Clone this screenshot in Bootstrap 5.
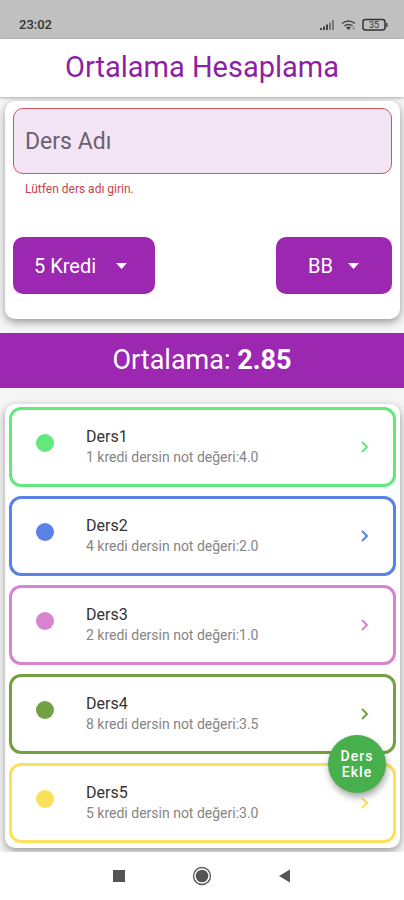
<!DOCTYPE html>
<html lang="tr">
<head>
<meta charset="utf-8">
<meta name="viewport" content="width=device-width, initial-scale=1">
<title>Ortalama Hesaplama</title>
<link href="https://cdn.jsdelivr.net/npm/bootstrap@5.3.0/dist/css/bootstrap.min.css" rel="stylesheet">
<style>
  body { font-family: Roboto, "Liberation Sans", sans-serif; background: #f6f6f6; }
  .status-strip { background: #c0c0c0; height: 39px; padding: 10px 16px 0 19px; color: #333; }
  .clock { font-size: 13px; line-height: 30px; font-weight: 500; }
  .app-header { background: #fff; height: 58px; box-shadow: 0 1px 3px rgba(0,0,0,.3); }
  .app-title { font-size: 29px; line-height: 57px; font-weight: 400; color: #8e1fa3; }
  .panel { background: #fff; border-radius: 10px; margin: 0 4px 0 5px; box-shadow: 0 3px 8px rgba(0,0,0,.4); }
  .form-panel { margin-top: 4px; padding: 7px 8px 25px; }
  .name-input { height: 66px; font-size: 23px; padding: 0 11px; background: #f3e5f5; border: 1px solid #d0555c; border-radius: 10px; color: #333; }
  .name-input::placeholder { color: #6b616e; opacity: 1; }
  .name-input:focus { background: #f3e5f5; }
  .error-text { font-size: 12px; line-height: 16px; margin: 7px 12px 40px; color: #c8434b; }
  .picker { height: 57px; width: auto; font-size: 20px; line-height: 24px; color: #fff; border: 0; border-radius: 10px;
    background: #9c27b0 url("data:image/svg+xml,%3Csvg xmlns='http://www.w3.org/2000/svg' viewBox='0 0 11 6'%3E%3Cpath d='M0 0h11L5.500 6z' fill='white'/%3E%3C/svg%3E") no-repeat right 28px center / 11px 6px; }
  .credit-picker { width: 142px; padding: 0 28px 0 21px; }
  .grade-picker { width: 116px; padding: 0 28px 0 32px; }
  .grade-picker.picker { background-position: right 33px center; }
  .average { background: #9c27b0; color: #fff; margin-top: 14px; font-size: 27px; line-height: 55px; }
  .list-panel { margin-top: 16px; margin-bottom: 4px; padding: 3px 4px 5px; }
  .courses { gap: 9px; }
  .course { min-height: 80px; border: 3px solid var(--tone); border-radius: 12px; padding: 0 22px 0 24px; color: #333; background: #fff; }
  .tone-green { --tone: #63e87c; } .tone-blue { --tone: #5a82e6; } .tone-pink { --tone: #d883cd; }
  .tone-olive { --tone: #72a043; } .tone-yellow { --tone: #fbe15a; }
  .spot { width: 18px; height: 18px; margin: 0 32px 8px 0; background: var(--tone); }
  .course-name { font-size: 16px; line-height: 21px; }
  .course-info { font-size: 14px; line-height: 21px; color: #858585; }
  .add-btn { right: 18px; bottom: 107px; width: 58px; height: 58px; padding: 0; background: #47b04c; color: #fff; font-size: 14px; line-height: 16px; font-weight: 500; letter-spacing: 1px; box-shadow: 1px 4px 7px rgba(0,0,0,.35); }
  .add-btn:hover { background: #3e9f43; color: #fff; }
  .system-nav { background: #fff; height: 48px; gap: 63px; }
  .system-nav button { width: 20px; height: 20px; }
</style>
</head>
<body>
<div class="position-relative min-vh-100 d-flex flex-column">
  <div class="status-strip d-flex justify-content-between">
    <span class="clock">23:02</span>
    <svg width="69" height="14" viewBox="0 0 69 14" class="mt-2" aria-hidden="true">
      <g fill="#444"><path d="M1 10h2v2H1zM4 8.500h2V12H4zM7 6.500h2V12H7z"/><path d="M10 4.500h2V12h-2zM13 2h2v10h-2z" fill="#777"/></g>
      <g fill="none" stroke="#444" stroke-width="1.500"><path d="M23 5.500q6.500-5 13 0"/><path d="M25.300 8q4.200-3.200 8.400 0" /></g>
      <path d="M27 9.500q2.500-2 5 0L29.500 12z" fill="#444"/><path d="M34 9h1.500v3H34z" fill="#888"/>
      <rect x="44" y="1.500" width="22" height="10.500" rx="2.500" fill="none" stroke="#333" stroke-width="1.500"/>
      <path d="M67.200 5h1.300v4h-1.300z" fill="#333"/>
      <text x="55" y="10" text-anchor="middle" font-family="Roboto, sans-serif" font-size="9" fill="#333">35</text>
    </svg>
  </div>
  <header class="app-header text-center"><h1 class="app-title m-0">Ortalama Hesaplama</h1></header>

  <main>
    <form class="panel form-panel">
      <input class="form-control name-input" type="text" placeholder="Ders Adı" aria-label="Ders Adı" aria-describedby="nameError" aria-invalid="true">
      <div id="nameError" class="error-text">Lütfen ders adı girin.</div>
      <div class="d-flex justify-content-between">
        <select class="form-select picker credit-picker" aria-label="Kredi"><option>5 Kredi</option></select>
        <select class="form-select picker grade-picker" aria-label="Harf notu"><option>BB</option></select>
      </div>
    </form>

    <div class="average text-center">Ortalama: <strong>2.85</strong></div>

    <div class="panel list-panel">
      <div class="courses d-flex flex-column">
        <a href="#" class="course tone-green d-flex align-items-center text-decoration-none">
          <span class="spot rounded-circle"></span>
          <span class="flex-grow-1"><span class="course-name d-block">Ders1</span><span class="course-info d-block">1 kredi dersin not değeri:4.0</span></span>
          <svg width="12" height="14" viewBox="0 0 12 14" fill="none" stroke="var(--tone)" stroke-width="2" aria-hidden="true"><path d="M3 2l5 5-5 5"/></svg>
        </a>
        <a href="#" class="course tone-blue d-flex align-items-center text-decoration-none">
          <span class="spot rounded-circle"></span>
          <span class="flex-grow-1"><span class="course-name d-block">Ders2</span><span class="course-info d-block">4 kredi dersin not değeri:2.0</span></span>
          <svg width="12" height="14" viewBox="0 0 12 14" fill="none" stroke="var(--tone)" stroke-width="2" aria-hidden="true"><path d="M3 2l5 5-5 5"/></svg>
        </a>
        <a href="#" class="course tone-pink d-flex align-items-center text-decoration-none">
          <span class="spot rounded-circle"></span>
          <span class="flex-grow-1"><span class="course-name d-block">Ders3</span><span class="course-info d-block">2 kredi dersin not değeri:1.0</span></span>
          <svg width="12" height="14" viewBox="0 0 12 14" fill="none" stroke="var(--tone)" stroke-width="2" aria-hidden="true"><path d="M3 2l5 5-5 5"/></svg>
        </a>
        <a href="#" class="course tone-olive d-flex align-items-center text-decoration-none">
          <span class="spot rounded-circle"></span>
          <span class="flex-grow-1"><span class="course-name d-block">Ders4</span><span class="course-info d-block">8 kredi dersin not değeri:3.5</span></span>
          <svg width="12" height="14" viewBox="0 0 12 14" fill="none" stroke="var(--tone)" stroke-width="2" aria-hidden="true"><path d="M3 2l5 5-5 5"/></svg>
        </a>
        <a href="#" class="course tone-yellow d-flex align-items-center text-decoration-none">
          <span class="spot rounded-circle"></span>
          <span class="flex-grow-1"><span class="course-name d-block">Ders5</span><span class="course-info d-block">5 kredi dersin not değeri:3.0</span></span>
          <svg width="12" height="14" viewBox="0 0 12 14" fill="none" stroke="var(--tone)" stroke-width="2" aria-hidden="true"><path d="M3 2l5 5-5 5"/></svg>
        </a>
      </div>
    </div>
  </main>

  <button type="button" class="btn add-btn position-absolute rounded-circle">Ders<br>Ekle</button>

  <nav class="system-nav position-relative mt-auto d-flex justify-content-center align-items-center" aria-label="Sistem">
    <button type="button" class="btn p-0 border-0 d-flex" aria-label="Son uygulamalar"><svg width="20" height="20" viewBox="0 0 20 20"><path d="M4 4h12v12H4z" fill="#555"/></svg></button>
    <button type="button" class="btn p-0 border-0 d-flex" aria-label="Ana ekran"><svg width="20" height="20" viewBox="0 0 20 20"><circle cx="10" cy="10" r="8.500" fill="none" stroke="#555" stroke-width="1.300"/><circle cx="10" cy="10" r="6.300" fill="#555"/></svg></button>
    <button type="button" class="btn p-0 border-0 d-flex" aria-label="Geri"><svg width="20" height="20" viewBox="0 0 20 20"><path d="M15 3.500v13L4 10z" fill="#555"/></svg></button>
  </nav>
</div>
<script src="https://cdn.jsdelivr.net/npm/bootstrap@5.3.0/dist/js/bootstrap.bundle.min.js"></script>
</body>
</html>
